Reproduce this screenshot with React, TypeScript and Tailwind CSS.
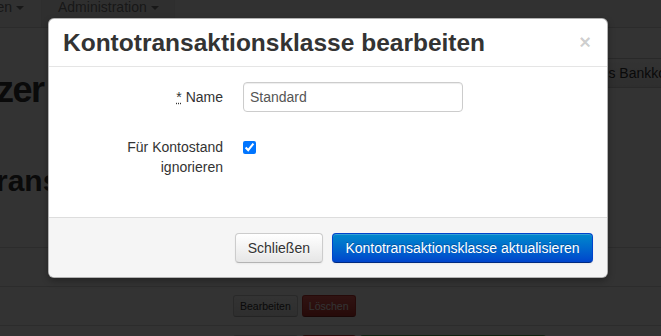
import React from "react";

function Caret({ color = "border-t-[#777]" }: { color?: string }) {
  return (
    <span
      className={`inline-block w-0 h-0 ml-[4px] align-middle border-t-[4px] border-x-[4px] border-x-transparent ${color}`}
    />
  );
}

function MiniBtn({ children, kind }: { children: React.ReactNode; kind: "default" | "danger" | "success" }) {
  const cls =
    kind === "default"
      ? "bg-linear-to-b from-white to-[#e6e6e6] border-[#ccc] border-b-[#b3b3b3] text-[#333]"
      : kind === "danger"
      ? "bg-linear-to-b from-[#ee5f5b] to-[#bd362f] border-[#bd362f] border-b-[#802420] text-white"
      : "bg-linear-to-b from-[#62c462] to-[#51a351] border-[#51a351] border-b-[#387038] text-white";
  return (
    <div
      className={`h-[22px] px-[6px] flex items-center rounded-[3px] border text-[10.5px] leading-[14px] whitespace-nowrap ${cls}`}
    >
      {children}
    </div>
  );
}

export default function App() {
  return (
    <div className="relative w-[661px] h-[336px] overflow-hidden bg-white font-['Liberation_Sans',Arial,sans-serif] text-[14px] text-[#333]">
      {/* Background page */}
      <div className="flex h-[28px] bg-[#f2f2f2] border-b border-[#d4d4d4] text-[#777] leading-[20px] overflow-hidden">
        <div className="w-[42px] shrink-0 flex justify-end pr-[17px] border-r border-[#e5e5e5] overflow-hidden whitespace-nowrap">
          <span className="-mt-[3px]">
            Einstellungen
            <Caret />
          </span>
        </div>
        <div className="w-[133px] shrink-0 pl-[16px] bg-[#ececec] border-r border-[#e5e5e5] whitespace-nowrap">
          <span className="block -mt-[3px]">
            Administration
            <Caret />
          </span>
        </div>
      </div>

      <div className="flex items-start mt-[30px]">
        <div className="w-[562px] shrink-0 pt-[12px] -ml-[4px] text-[36px] font-bold leading-[40px] tracking-[-1.5px] whitespace-nowrap overflow-hidden">
          zer
        </div>
        <div className="h-[30px] shrink-0 ml-[4px] px-[12px] flex items-center border border-[#ccc] rounded-[4px] bg-linear-to-b from-white to-[#e6e6e6] whitespace-nowrap">
          Neues Bankkonto
        </div>
      </div>

      <div className="mt-[51px] -ml-[4px] text-[30px] font-bold leading-[40px] whitespace-nowrap">
        ransaktionsklassen
      </div>

      <div className="mt-[46px]">
        <div className="h-[39px] border-t border-[#ddd]" />
        <div className="h-[39px] border-t border-[#ddd] flex items-center pl-[233px] gap-[4px]">
          <MiniBtn kind="default">Bearbeiten</MiniBtn>
          <MiniBtn kind="danger">Löschen</MiniBtn>
        </div>
        <div className="h-[39px] border-t border-[#ddd] flex items-start pt-[9px] pl-[233px] gap-[4px]">
          <MiniBtn kind="default">Bearbeiten</MiniBtn>
          <MiniBtn kind="danger">Löschen</MiniBtn>
          <div className="w-[186px]">
            <MiniBtn kind="success">Als Standard festlegen</MiniBtn>
          </div>
        </div>
      </div>

      {/* Backdrop */}
      <div className="absolute inset-0 bg-black/80" />

      {/* Modal */}
      <div className="absolute left-[48px] top-[18px] w-[560px] rounded-[6px] bg-white border border-black/30 shadow-[0_3px_7px_rgba(0,0,0,0.3)] overflow-hidden">
        <div className="h-[48px] border-b border-[#e5e5e5] pl-[14px] pr-[16px] flex items-center justify-between">
          <h3 className="text-[24.5px] font-bold leading-[30px] text-[#333] whitespace-nowrap">
            Kontotransaktionsklasse bearbeiten
          </h3>
          <span className="text-[20px] font-bold leading-[20px] text-black/20 -mt-[2px]">×</span>
        </div>

        <div className="h-[150px] px-[14px] pt-[15px]">
          <div className="flex">
            <label className="w-[160px] shrink-0 text-right pt-[5px] leading-[20px] text-[#333]">
              <abbr title="required" className="underline decoration-dotted">*</abbr> Name
            </label>
            <div className="ml-[20px]">
              <input
                type="text"
                readOnly
                value="Standard"
                className="w-[220px] h-[30px] px-[6px] border border-[#ccc] rounded-[4px] text-[14px] text-[#555] shadow-[inset_0_1px_1px_rgba(0,0,0,0.075)] outline-none"
              />
            </div>
          </div>
          <div className="flex mt-[20px]">
            <label className="w-[160px] shrink-0 text-right pt-[5px] leading-[20px] text-[#333]">
              Für Kontostand ignorieren
            </label>
            <div className="ml-[20px] pt-[9px]">
              <input type="checkbox" checked readOnly className="block m-0 w-[13px] h-[13px]" />
            </div>
          </div>
        </div>

        <div className="h-[60px] bg-[#f5f5f5] border-t border-[#ddd] pr-[14px] flex items-center justify-end gap-[9px]">
          <button className="h-[30px] px-[12px] rounded-[4px] border border-[#ccc] border-b-[#b3b3b3] bg-linear-to-b from-white to-[#e6e6e6] text-[#333] text-[14px] leading-[20px] shadow-[inset_0_1px_0_rgba(255,255,255,0.2),0_1px_2px_rgba(0,0,0,0.05)] [text-shadow:0_1px_1px_rgba(255,255,255,0.75)]">
            Schließen
          </button>
          <button className="h-[30px] w-[261px] px-[12px] rounded-[4px] border border-[#0044cc] border-b-[#002a80] bg-linear-to-b from-[#0088cc] to-[#0044cc] text-white text-[14px] leading-[20px] whitespace-nowrap shadow-[inset_0_1px_0_rgba(255,255,255,0.2),0_1px_2px_rgba(0,0,0,0.05)] [text-shadow:0_-1px_0_rgba(0,0,0,0.25)]">
            Kontotransaktionsklasse aktualisieren
          </button>
        </div>
      </div>
    </div>
  );
}
